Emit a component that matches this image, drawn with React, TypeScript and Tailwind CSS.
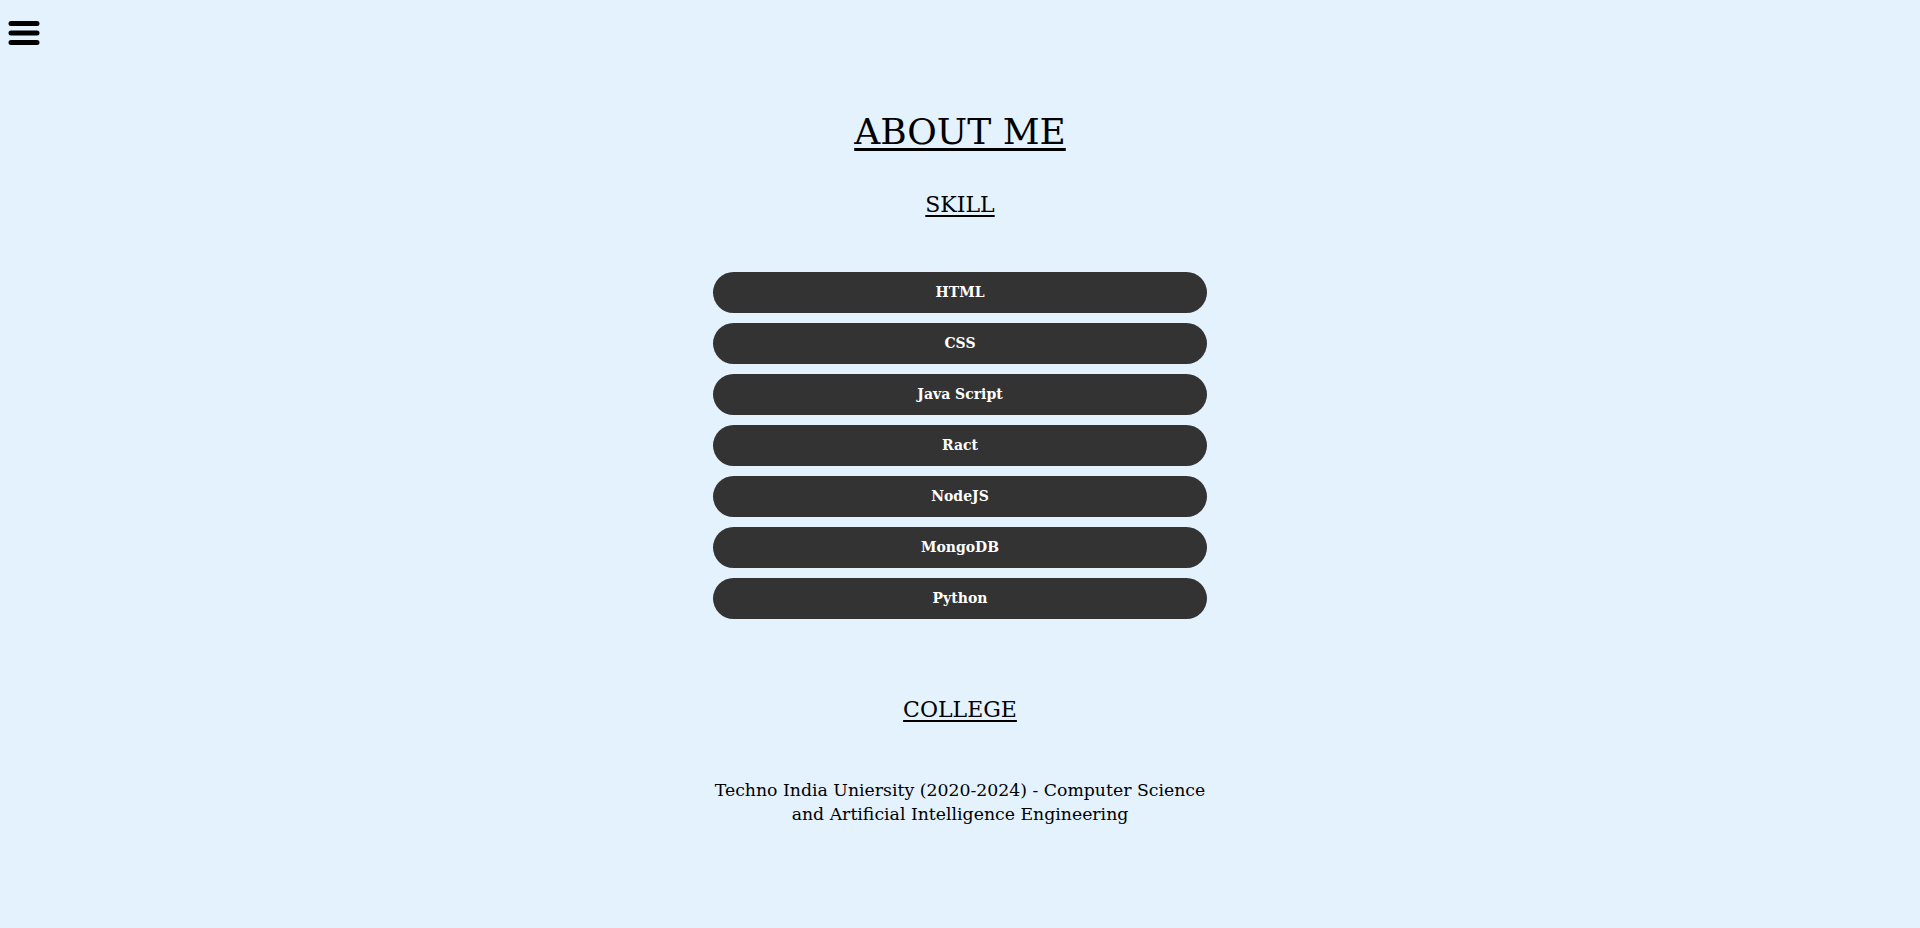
const skills = ['HTML', 'CSS', 'Java Script', 'Ract', 'NodeJS', 'MongoDB', 'Python'];

function MenuIcon() {
  return (
    <svg width="32" height="26" viewBox="0 0 32 26" fill="none">
      <path d="M3 3.5h26M3 13h26M3 22.5h26" stroke="black" strokeWidth="5" strokeLinecap="round" />
    </svg>
  );
}

export default function App() {
  return (
    <div
      className="min-h-screen bg-[#e3f2fd] text-black"
      style={{ fontFamily: '"DejaVu Serif", serif' }}
    >
      <header className="h-[60px] pl-[8px] pt-[20px]">
        <button className="block">
          <MenuIcon />
        </button>
      </header>

      <main className="flex flex-col items-center">
        <h1 className="mt-[52px] text-[36px] leading-[40px] underline underline-offset-[4px] decoration-[3px]">
          ABOUT ME
        </h1>
        <h2 className="mt-[39px] text-[22px] leading-[28px] underline underline-offset-[3px] decoration-[2px]">
          SKILL
        </h2>

        <div className="mt-[53px] flex w-[494px] flex-col gap-[10px]">
          {skills.map((s) => (
            <div
              key={s}
              className="flex h-[41px] items-center justify-center rounded-full bg-[#333333] text-[14px] font-bold text-white"
            >
              {s}
            </div>
          ))}
        </div>

        <h2 className="mt-[77px] text-[22px] leading-[28px] underline underline-offset-[3px] decoration-[2px]">
          COLLEGE
        </h2>
        <p className="mt-[54px] w-[500px] text-center text-[17.3px] leading-[24px]">
          Techno India Uniersity (2020-2024) - Computer Science and Artificial Intelligence Engineering
        </p>
      </main>
    </div>
  );
}
